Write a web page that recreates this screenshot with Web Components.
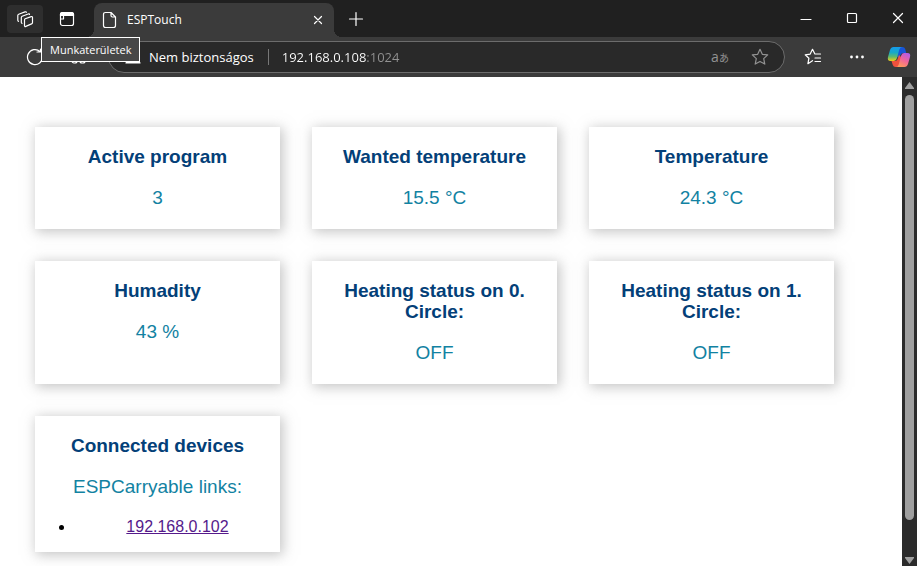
<!DOCTYPE html>
<html lang="hu">
<head>
<meta charset="utf-8">
<title>ESPTouch</title>
<style>
html, body { margin: 0; height: 100%; overflow: hidden; }
body { background: #fff; }
</style>
</head>
<body>
<browser-window>
  <tab-strip slot="chrome"></tab-strip>
  <tool-bar slot="chrome"></tool-bar>
  <card-grid>
    <info-card heading="Active program"><span slot="reading">3</span></info-card>
    <info-card heading="Wanted temperature"><span slot="reading">15.5 °C</span></info-card>
    <info-card heading="Temperature"><span slot="reading">24.3 °C</span></info-card>
    <info-card heading="Humadity"><span slot="reading">43 %</span></info-card>
    <info-card heading="Heating status on 0. Circle:"><span slot="reading">OFF</span></info-card>
    <info-card heading="Heating status on 1. Circle:"><span slot="reading">OFF</span></info-card>
    <info-card heading="Connected devices"><span slot="reading">ESPCarryable links:</span><device-list></device-list></info-card>
  </card-grid>
</browser-window>

<script>
const define = (name, html) => {
  const template = document.createElement('template');
  template.innerHTML = html;
  customElements.define(name, class extends HTMLElement {
    constructor() {
      super();
      this.attachShadow({ mode: 'open' }).append(template.content.cloneNode(true));
    }
    connectedCallback() {
      const title = this.shadowRoot.querySelector('[data-heading]');
      if (title) title.textContent = this.getAttribute('heading');
    }
  });
};

const controls = `
  button { display: flex; align-items: center; justify-content: center; flex: none;
    border: 0; padding: 0; margin: 0; background: none; color: inherit; font: inherit; }
  svg { display: block; fill: none; stroke: currentColor; stroke-width: 1.2;
    stroke-linecap: round; stroke-linejoin: round; }
`;

define('browser-window', `
<style>
  :host { display: flex; flex-direction: column; height: 100vh; }
  header { flex: none; color: #fff; font-family: "Open Sans", "Noto Sans CJK JP", sans-serif; }
  .view { flex: 1; min-height: 0; display: flex; }
  main { flex: 1; min-width: 0; overflow: hidden; background: #fff; }
</style>
<header><slot name="chrome"></slot></header>
<div class="view"><main><slot></slot></main><scroll-rail></scroll-rail></div>`);

define('tab-strip', `
<style>${controls}
  :host { display: flex; align-items: center; height: 37px; padding-left: 7px; background: #202020; }
  .tool { width: 36px; height: 28px; border-radius: 4px; margin-right: 6px; }
  .active { background: #2e2e2e; }
  .tab { position: relative; display: flex; align-items: center; align-self: flex-end; box-sizing: border-box;
    flex: 0 1 240px; height: 34px; margin-left: 3px; padding: 0 6px 0 8px; gap: 10px;
    border-radius: 8px 8px 0 0; background: #3b3b3b; font-size: 12px; line-height: 16px; }
  .tab::before, .tab::after { content: ""; position: absolute; bottom: 0; width: 8px; height: 8px; }
  .tab::before { right: 100%; background: radial-gradient(circle at 0 0, transparent 8px, #3b3b3b 8px); }
  .tab::after { left: 100%; background: radial-gradient(circle at 100% 0, transparent 8px, #3b3b3b 8px); }
  .name { flex: 1; }
  .close { width: 20px; height: 20px; }
  .add { width: 28px; height: 28px; margin-left: 8px; }
  .window { display: flex; margin-left: auto; height: 34px; }
  .window button { width: 46px; }
  .window button:last-child { width: 38px; margin-left: 4px; }
</style>
<button class="tool active" aria-label="Munkaterületek"><svg width="18" height="18" viewBox="0 0 18 18"><path d="M9.200 8.800l6-2.200q1.300-.4 1.300.9v5q0 1-.9 1.400l-5.800 2.500q-1.300.5-1.300-.9v-5.300q0-1 .7-1.400zM13.500 4.500q-.2-.9-1.300-.5l-6 2.300q-.9.400-.9 1.400v4.600q0 .9.700 1.100M10.300 2.400q-.2-.9-1.300-.5L2.700 4.200q-.9.400-.9 1.400v4.600q0 .9.700 1.100"/></svg></button>
<button class="tool" aria-label="Lapműveletek"><svg width="16" height="16" viewBox="0 0 16 16"><rect x="1.500" y="1.500" width="13" height="13" rx="2"/><path d="M1.500 4.500v-1q0-2 2-2h9q2 0 2 2v1z" fill="currentColor"/><path d="M4.500 5v3h-3"/></svg></button>
<div class="tab">
  <svg width="15" height="18" viewBox="0 0 15 18"><path d="M3.500 1.500H9l4.500 4.500v8.500q0 2-2 2h-8q-2 0-2-2v-11q0-2 2-2zM9 1.500v3q0 1.500 1.500 1.500h3"/></svg>
  <span class="name">ESPTouch</span>
  <button class="close" aria-label="Bezárás"><svg width="10" height="10" viewBox="0 0 10 10"><path d="M1.500 1.500l7 7M8.500 1.500l-7 7"/></svg></button>
</div>
<button class="add" aria-label="Új lap"><svg width="16" height="16" viewBox="0 0 16 16"><path d="M8 1.500v13M1.500 8h13"/></svg></button>
<div class="window">
  <button aria-label="Kis méret"><svg width="12" height="12" viewBox="0 0 12 12"><path d="M1 6.500h10"/></svg></button>
  <button aria-label="Teljes méret"><svg width="12" height="14" viewBox="0 0 12 14"><rect x="1.500" y="1.500" width="9" height="9" rx="1"/></svg></button>
  <button aria-label="Ablak bezárása"><svg width="12" height="14" viewBox="0 0 12 14"><path d="M1.500 1.500l9 9M10.500 1.500l-9 9"/></svg></button>
</div>`);

define('tool-bar', `
<style>${controls}
  :host { position: relative; display: flex; align-items: center; height: 40px; padding-left: 17px; background: #3b3b3b; }
  .nav { width: 36px; height: 32px; margin-right: 8px; }
  .address { display: flex; align-items: center; flex: 1; min-width: 0; box-sizing: border-box; height: 32px;
    margin-left: 3px; padding: 0 8px 0 16px; border: 1px solid #6c6c6c; border-radius: 16px; background: #292929; font-size: 13px; line-height: 20px; }
  .secure { gap: 8px; padding-right: 14px; white-space: nowrap; }
  .rule { width: 1px; height: 16px; background: #777; }
  input { flex: 1; min-width: 0; height: 24px; padding: 0; margin: 0 13px; border: 0; outline: 0; font: inherit;
    color: transparent; caret-color: #fff; background: linear-gradient(90deg, #fff 85px, #929292 85px);
    -webkit-background-clip: text; background-clip: text; }
  .inside { width: 32px; height: 28px; margin-left: 8px; color: #929292; }
  .lang { font-size: 14px; line-height: 20px; }
  .lang small { font-size: 10px; }
  .actions { display: flex; gap: 8px; margin-left: 10px; }
  .actions button { width: 36px; height: 32px; }
  .actions button:last-child { width: 34px; justify-content: flex-start; padding-left: 4px; box-sizing: border-box; }
  .tip { position: absolute; left: 41px; top: 0; box-sizing: border-box; height: 25px; padding: 0 8px;
    border: 1px solid #fff; background: #474747; font-size: 11px; line-height: 23px; }
</style>
<button class="nav" aria-label="Frissítés"><svg width="18" height="18" viewBox="0 0 18 18"><path d="M14 3.500A7.500 7.500 0 1 0 16.500 9M14.500 1v3H11"/></svg></button>
<button class="nav" aria-label="Alkalmazások"><svg width="18" height="18" viewBox="0 0 18 18"><rect x="2" y="2" width="5" height="5" rx="1"/><rect x="11" y="2" width="5" height="5" rx="1"/><rect x="2" y="10" width="5" height="5" rx="2"/><rect x="10" y="10" width="5" height="5" rx="2"/></svg></button>
<div class="address">
  <button class="secure"><svg width="16" height="14" viewBox="0 0 16 14"><path d="M8 1L15 13H1z" fill="currentColor"/></svg><span>Nem biztonságos</span></button>
  <span class="rule"></span>
  <input type="text" aria-label="Cím" value="192.168.0.108:1024">
  <button class="inside lang" aria-label="Fordítás"><span>a<small>あ</small></span></button>
  <button class="inside" aria-label="Kedvencekhez adás"><svg width="18" height="18" viewBox="0 0 18 18"><path d="M9 1.300l2.300 5 5.400.6-4 3.700 1.100 5.500L9 13.400l-4.800 2.700 1.100-5.500-4-3.700 5.400-.6z"/></svg></button>
</div>
<div class="actions">
  <button aria-label="Kedvencek"><svg width="18" height="18" viewBox="0 0 18 18"><path d="M8.500 12.700l-4.600 3 1-5.400-3.700-3.500 5-.7 2.300-4.800 2.400 4.700h5.600M11 10h5.500M11 13.500h5.500"/></svg></button>
  <button aria-label="Beállítások"><svg width="16" height="16" viewBox="0 0 16 16"><g fill="currentColor" stroke="none"><circle cx="2.500" cy="8" r="1.400"/><circle cx="8" cy="8" r="1.400"/><circle cx="13.500" cy="8" r="1.400"/></g></svg></button>
  <button aria-label="Copilot"><svg width="24" height="24" viewBox="0 0 24 24">
    <defs>
      <linearGradient id="blue" x1="0" y1="0" x2="0" y2="1"><stop offset="0" stop-color="#159bec"/><stop offset=".4" stop-color="#16a9c8"/><stop offset=".7" stop-color="#61b96b"/><stop offset="1" stop-color="#f5cf16"/></linearGradient>
      <linearGradient id="pink" x1=".8" y1="0" x2=".3" y2="1"><stop offset="0" stop-color="#b05be8"/><stop offset=".5" stop-color="#f0659b"/><stop offset="1" stop-color="#ff9b58"/></linearGradient>
    </defs>
    <g stroke="none">
    <path d="M12 2h3.500q2 0 2.700 2l1 4h-3q-2 0-2.800 2L12 13l-3-2z" fill="#1755d8"/>
    <path d="M13 22H8.500q-2 0-2.700-2L4.500 16h3.500q2 0 2.700-2L12 10l3 3z" fill="#ef513d"/>
    <path d="M6.500 2H15q-2 0-2.700 2.500L10 13q-.8 3-3 3H3.500q-3.500 0-2.500-4l2-7q1-3 3.500-3z" fill="url(#blue)"/>
    <path d="M17.500 22H9q2 0 2.700-2.500L14 11q.8-3 3-3h3.500q3.500 0 2.500 4l-2 7q-1 3-3.500 3z" fill="url(#pink)"/>
    </g>
  </svg></button>
</div>
<div class="tip" role="tooltip">Munkaterületek</div>`);

define('scroll-rail', `
<style>
  :host { display: flex; flex-direction: column; align-items: center; flex: none; width: 15px; box-sizing: border-box;
    padding: 5px 0 2px; background: #2b2b2b; }
  svg { display: block; flex: none; fill: #9f9f9f; }
  .track { flex: 1; width: 9px; padding: 6px 0 0; box-sizing: border-box; }
  .thumb { width: 9px; height: 92%; border-radius: 5px; background: #9f9f9f; }
</style>
<svg width="9" height="7" viewBox="0 0 9 7"><path d="M4.500 0L9 6v1H0V6z"/></svg>
<div class="track"><div class="thumb"></div></div>
<svg width="9" height="7" viewBox="0 0 9 7"><path d="M0 0h9v1L4.500 7 0 1z"/></svg>`);

define('card-grid', `
<style>
  :host { display: grid; grid-template-columns: repeat(auto-fit, minmax(200px, 1fr)); gap: 32px;
    max-width: 799px; padding: 50px 35px; font-family: "Liberation Sans", Arial, sans-serif; }
</style>
<slot></slot>`);

define('info-card', `
<style>
  :host { display: block; padding: 19px 0 16px; background: #fff; text-align: center;
    box-shadow: 2px 2px 12px 1px rgba(140, 140, 140, .5); }
  h2 { margin: 0; padding: 0 16px; color: #034078; font-size: 19px; line-height: 21px; font-weight: bold; }
  p { margin: 20px 0 4px; color: #1282a2; font-size: 19px; line-height: 22px; }
</style>
<h2 data-heading></h2>
<p><slot name="reading"></slot></p>
<slot></slot>`);

define('device-list', `
<style>
  :host { display: block; font-size: 16px; line-height: 18px; color: #000; }
  ul { margin: 20px 0 0; padding: 0 0 0 40px; }
  a { color: #551a8b; }
</style>
<ul><li><a href="http://192.168.0.102/">192.168.0.102</a></li></ul>`);
</script>
</body>
</html>
